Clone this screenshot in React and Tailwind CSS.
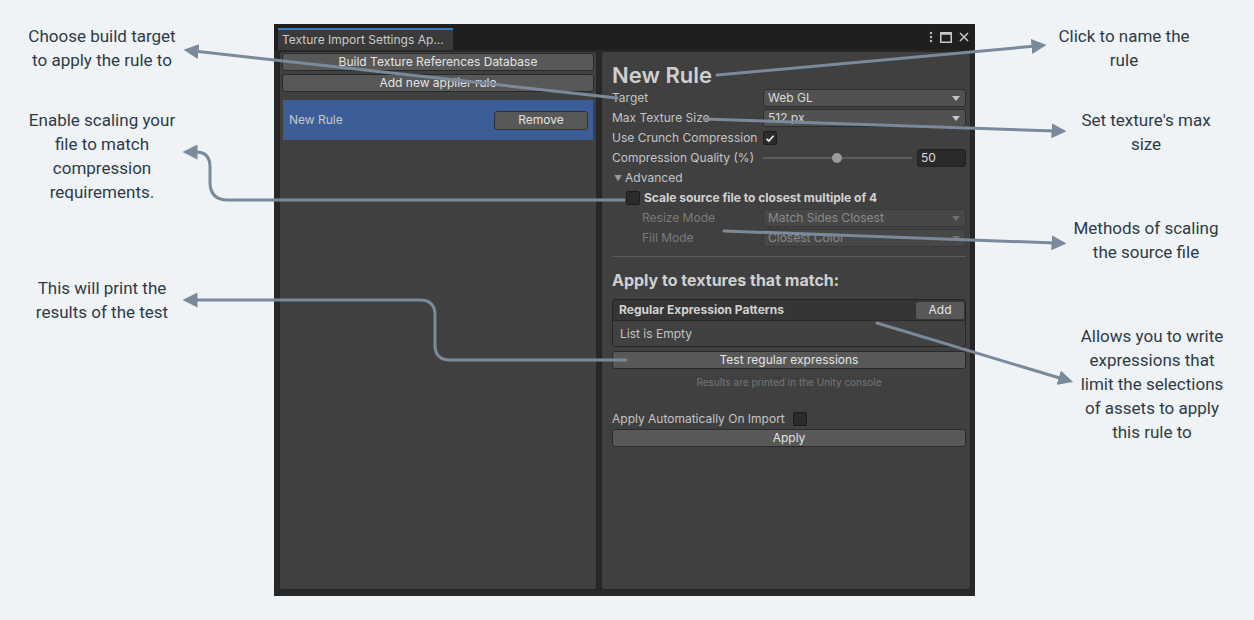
import React from 'react';

const ui = { fontFamily: 'Inter, "Liberation Sans", sans-serif' };
const note = { fontFamily: 'Roboto, "Liberation Sans", sans-serif' };

function Caret({ dim }) {
  return (
    <svg width="8" height="5" viewBox="0 0 8 5" className="shrink-0">
      <path d="M0 0 L8 0 L4 5 Z" fill={dim ? '#6f6f6f' : '#c4c4c4'} />
    </svg>
  );
}

function Dropdown({ value, dim }) {
  return (
    <div
      className={`flex-1 h-[18px] rounded-[3px] flex items-center justify-between pl-[4px] pr-[5px] border ${
        dim ? 'bg-[#474747] border-[#3a3a3a] text-[#8a8a8a]' : 'bg-[#515151] border-[#2e2e2e] text-[#dcdcdc]'
      }`}
    >
      <span>{value}</span>
      <Caret dim={dim} />
    </div>
  );
}

function Check({ checked }) {
  return (
    <div className="w-[14px] h-[14px] rounded-[2px] bg-[#2b2b2b] border border-[#1c1c1c] flex items-center justify-center shrink-0">
      {checked && (
        <svg width="10" height="9" viewBox="0 0 10 9">
          <path d="M1.5 4.8 L3.9 7 L8.5 1.8" stroke="#e8e8e8" strokeWidth="1.7" fill="none" />
        </svg>
      )}
    </div>
  );
}

function Row({ label, children, indent, dim }) {
  return (
    <div className="h-[20px] flex items-center">
      <div
        className={`w-[151px] shrink-0 ${dim ? 'text-[#7a7a7a]' : 'text-[#c4c4c4]'}`}
        style={indent ? { paddingLeft: indent } : undefined}
      >
        {label}
      </div>
      <div className="flex-1 flex items-center">{children}</div>
    </div>
  );
}

function Button({ children, className = '' }) {
  return (
    <div
      className={`h-[18px] rounded-[3px] bg-[#585858] border border-[#2a2a2a] text-[#e4e4e4] flex items-center justify-center ${className}`}
    >
      {children}
    </div>
  );
}

function Note({ lines, className = '' }) {
  return (
    <div className={`w-[204px] text-center text-[17px] leading-[24px] text-[#2e3b47] ${className}`} style={note}>
      {lines.map(l => (
        <div key={l}>{l}</div>
      ))}
    </div>
  );
}

function Arrows() {
  const c = '#7a8a9a';
  return (
    <svg className="absolute inset-0 pointer-events-none" width="1254" height="620">
      <defs>
        <marker id="head" markerWidth="5" markerHeight="5" refX="1.5" refY="2.5" orient="auto" markerUnits="strokeWidth">
          <path d="M0 0 L5 2.5 L0 5 Z" fill={c} />
        </marker>
      </defs>
      <g stroke={c} strokeWidth="3" fill="none" strokeLinecap="round">
        <path d="M617 98 L194 51" markerEnd="url(#head)" />
        <path d="M717 75 L1036 46" markerEnd="url(#head)" />
        <path d="M704 119 L1056 131" markerEnd="url(#head)" />
        <path d="M624 200 L228 200 Q210 200 210 182 L210 167 Q210 152 196 152 L193 152" markerEnd="url(#head)" />
        <path d="M626 360 L450 360 Q435 360 435 345 L435 315 Q435 300 420 300 L193 300" markerEnd="url(#head)" />
        <path d="M724 231 L1056 243" markerEnd="url(#head)" />
        <path d="M877 323 L1063 379" markerEnd="url(#head)" />
      </g>
    </svg>
  );
}

export default function App() {
  return (
    <div className="relative w-[1254px] h-[620px] bg-[#eff3f6] overflow-hidden flex">
      {/* left notes */}
      <div className="w-[274px] shrink-0 flex flex-col pt-[24px]">
        <Note lines={['Choose build target', 'to apply the rule to']} />
        <Note className="mt-[36px]" lines={['Enable scaling your', 'file to match', 'compression', 'requirements.']} />
        <Note className="mt-[72px]" lines={['This will print the', 'results of the test']} />
      </div>

      {/* unity window */}
      <div className="mt-[24px] w-[701px] h-[572px] shrink-0 bg-[#282828] flex flex-col text-[12px]" style={ui}>
        <div className="h-[26px] bg-[#1f1f1f] flex items-end justify-between pl-[4px] pr-[6px]">
          <div className="w-[175px] h-[22px] bg-[#3a3a3a] border-t-2 border-[#3a79bb] text-[#cacaca] pl-[4px] flex items-center">
            Texture Import Settings Ap...
          </div>
          <div className="h-[26px] flex items-center gap-[7px] text-[#c4c4c4]">
            <svg width="4" height="12" viewBox="0 0 4 12">
              <circle cx="2" cy="2" r="1.2" fill="#bdbdbd" />
              <circle cx="2" cy="6" r="1.2" fill="#bdbdbd" />
              <circle cx="2" cy="10" r="1.2" fill="#bdbdbd" />
            </svg>
            <svg width="12" height="11" viewBox="0 0 12 11">
              <rect x="0.75" y="0.75" width="10.5" height="9.5" stroke="#c8c8c8" strokeWidth="1.5" fill="none" />
              <rect x="0.75" y="0.75" width="10.5" height="2" fill="#c8c8c8" />
            </svg>
            <svg width="10" height="10" viewBox="0 0 10 10">
              <path d="M1 1 L9 9 M9 1 L1 9" stroke="#c8c8c8" strokeWidth="1.5" />
            </svg>
          </div>
        </div>

        <div className="flex-1 flex gap-[4px] pl-[5px] pr-[4px] pt-[1px] pb-[6px]">
          {/* rules list */}
          <div className="w-[318px] bg-[#404040] border border-[#242424] rounded-[3px] flex flex-col px-[2px] pt-[1px]">
            <Button>Build Texture References Database</Button>
            <Button className="mt-[3px]">Add new applier rule</Button>
            <div className="mt-[8px] mx-[1px] h-[40px] bg-[#3c5e98] flex items-center justify-between pl-[6px] pr-[5px] text-[#c8c8c8]">
              <span>New Rule</span>
              <Button className="w-[94px] h-[19px] border-[#303030]">Remove</Button>
            </div>
          </div>

          {/* rule inspector */}
          <div className="flex-1 bg-[#404040] border border-[#242424] rounded-[3px] flex flex-col pl-[10px] pr-[4px]">
            <div className="h-[36px] pt-[9px] text-[22px] leading-[28px] font-semibold text-[#cfcfcf]">New Rule</div>
            <Row label="Target">
              <Dropdown value="Web GL" />
            </Row>
            <Row label="Max Texture Size">
              <Dropdown value="512 px" />
            </Row>
            <Row label="Use Crunch Compression">
              <Check checked />
            </Row>
            <Row label="Compression Quality (%)">
              <div className="w-[149px] relative h-[12px] flex items-center">
                <div className="w-full h-[2px] bg-[#5e5e5e]" />
                <div className="absolute left-[69px] w-[10px] h-[10px] rounded-full bg-[#9a9a9a]" />
              </div>
              <div className="ml-[5px] flex-1 h-[18px] bg-[#2a2a2a] border border-[#212121] rounded-[3px] pl-[3px] flex items-center text-[#dcdcdc]">
                50
              </div>
            </Row>
            <div className="h-[20px] flex items-center text-[#c4c4c4]">
              <span className="text-[8px] text-[#999] ml-[2px] mr-[3px]">▼</span>
              Advanced
            </div>
            <div className="h-[20px] flex items-center pl-[14px] gap-[4px] text-[#d2d2d2] font-bold">
              <Check />
              Scale source file to closest multiple of 4
            </div>
            <Row label="Resize Mode" indent={30} dim>
              <Dropdown value="Match Sides Closest" dim />
            </Row>
            <Row label="Fill Mode" indent={30} dim>
              <Dropdown value="Closest Color" dim />
            </Row>
            <div className="mt-[8px] h-px bg-[#595959]" />
            <div className="mt-[11px] h-[24px] leading-[24px] text-[16px] font-bold text-[#d0d0d0]">Apply to textures that match:</div>
            <div className="mt-[7px] border border-[#252525] rounded-[3px] overflow-hidden">
              <div className="h-[20px] bg-[#353535] flex items-center justify-between pl-[6px] pr-[1px] font-bold text-[#d2d2d2]">
                <span>Regular Expression Patterns</span>
                <div className="w-[48px] h-[17px] bg-[#585858] rounded-[2px] flex items-center justify-center font-normal text-[#e4e4e4]">
                  Add
                </div>
              </div>
              <div className="h-[26px] bg-[#414141] border-t border-[#2a2a2a] pl-[7px] flex items-center text-[#c4c4c4]">
                List is Empty
              </div>
            </div>
            <Button className="mt-[4px]">Test regular expressions</Button>
            <div className="mt-[6px] h-[14px] text-center text-[10px] text-[#767676]">Results are printed in the Unity console</div>
            <div className="mt-[20px] h-[20px] flex items-center text-[#c4c4c4]">
              <span className="w-[181px]">Apply Automatically On Import</span>
              <Check />
            </div>
            <Button>Apply</Button>
          </div>
        </div>
      </div>

      {/* right notes */}
      <div className="flex-1 flex flex-col pt-[24px]">
        <Note className="ml-[47px]" lines={['Click to name the', 'rule']} />
        <Note className="ml-[69px] mt-[36px]" lines={["Set texture's max", 'size']} />
        <Note className="ml-[69px] mt-[60px]" lines={['Methods of scaling', 'the source file']} />
        <Note className="ml-[75px] mt-[60px]" lines={['Allows you to write', 'expressions that', 'limit the selections', 'of assets to apply', 'this rule to']} />
      </div>

      <Arrows />
    </div>
  );
}
